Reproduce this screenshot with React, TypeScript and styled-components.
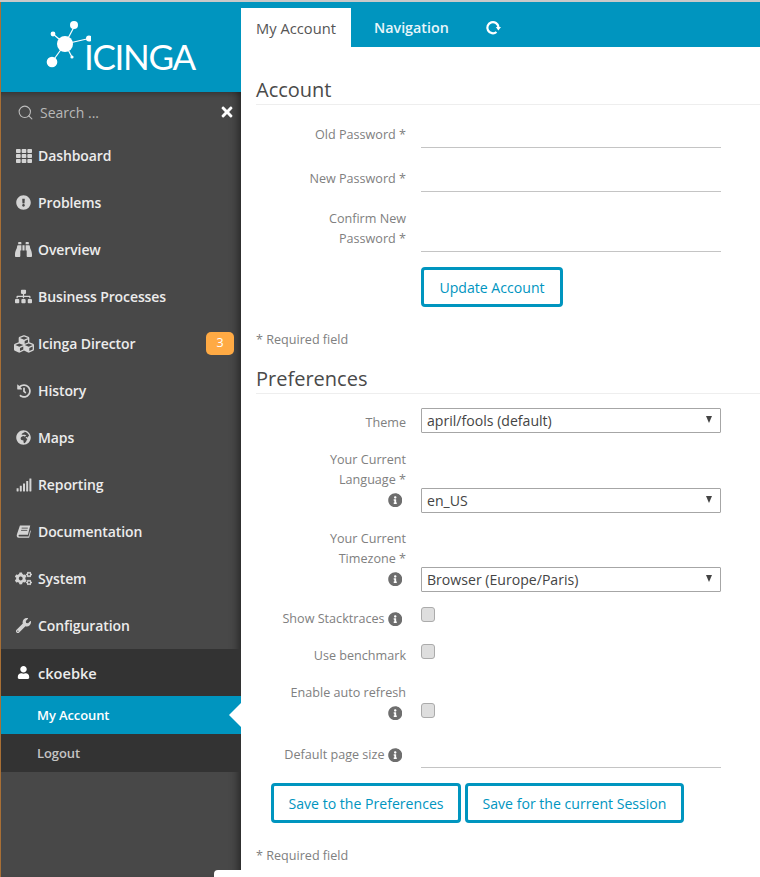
import React from "react";
import styled, { createGlobalStyle } from "styled-components";
import {
  FaTh, FaExclamationCircle, FaBinoculars, FaSitemap, FaCubes, FaHistory,
  FaGlobeAfrica, FaSignal, FaCogs, FaWrench, FaUser, FaInfoCircle, FaTimes,
} from "react-icons/fa";
import { Search } from "lucide-react";

const Global = createGlobalStyle`
  html, body { margin: 0; padding: 0; height: 100%; overflow: hidden; background: #fff; }
  body { font-family: "Open Sans", "Noto Sans", sans-serif; }
  * { box-sizing: border-box; }
`;

const Page = styled.div`
  position: relative;
  display: flex;
  width: 760px;
  height: 877px;
  overflow: hidden;
  border-top: 2px solid #c9c9c9;
`;

const Sidebar = styled.aside`
  width: 241px;
  flex: none;
  display: flex;
  flex-direction: column;
  background: #484848;
  border-left: 1px solid #a86f35;
  box-shadow: inset -10px 0 9px -7px rgba(0, 0, 0, 0.45);
`;

const Brand = styled.div`
  height: 90px;
  flex: none;
  background: #0095bf;
  display: flex;
  align-items: flex-start;
  padding: 16px 0 0 44px;
`;

const LogoMark = styled.svg`
  width: 46px;
  height: 56px;
  flex: none;
  display: block;
`;

const Wordmark = styled.span`
  margin: 17px 0 0 -7px;
  font-family: "Lato", sans-serif;
  font-size: 35px;
  line-height: 42px;
  font-weight: 400;
  color: #fff;
  letter-spacing: -1.3px;
`;

const SearchRow = styled.div`
  height: 40px;
  display: flex;
  align-items: center;
  padding: 0 6px 0 16px;
  gap: 6px;
  color: #bdbdbd;
  font-size: 14px;
  box-shadow: inset 0 7px 6px -6px rgba(0, 0, 0, 0.35);
`;

const SearchText = styled.span`
  flex: 1;
  color: #b8b8b8;
`;

const Item = styled.div<{ $dark?: boolean }>`
  height: 47px;
  display: flex;
  align-items: center;
  color: #ececec;
  font-size: ${(p) => (p.$dark ? "14.6px" : "14px")};
  font-weight: 600;
  letter-spacing: ${(p) => (p.$dark ? "0" : "-0.1px")};
  padding-right: 7px;
  background: ${(p) => (p.$dark ? "#333" : "transparent")};
`;

const IconSlot = styled.span`
  width: 37px;
  flex: none;
  display: flex;
  justify-content: center;
  padding-left: 15px;
  padding-right: 7px;
  color: #d4d4d4;
  font-size: 15px;
  svg { display: block; flex: none; }
`;

const ItemLabel = styled.span`
  flex: 1;
`;

const Badge = styled.span`
  width: 28px;
  height: 23px;
  border-radius: 5px;
  background: #ffaa44;
  color: #fff;
  font-size: 12.5px;
  font-weight: 400;
  letter-spacing: 0;
  display: flex;
  align-items: center;
  justify-content: center;
  padding-bottom: 3px;
`;

const SubMenu = styled.div`
  background: #333;
`;

const SubItem = styled.div<{ $active?: boolean }>`
  position: relative;
  height: 38px;
  display: flex;
  align-items: center;
  padding-left: 36px;
  font-size: 13px;
  font-weight: 600;
  letter-spacing: -0.1px;
  color: ${(p) => (p.$active ? "#fff" : "#c4c4c4")};
  background: ${(p) => (p.$active ? "#0095bf" : "transparent")};
`;

const Pointer = styled.span`
  position: absolute;
  right: 0;
  top: 7px;
  width: 0;
  height: 0;
  border-style: solid;
  border-width: 12px 12px 12px 0;
  border-color: transparent #fff transparent transparent;
`;

const Main = styled.main`
  flex: 1;
  min-width: 0;
  display: flex;
  flex-direction: column;
`;

const TabBar = styled.nav`
  height: 45px;
  flex: none;
  background: #0095bf;
  display: flex;
  align-items: flex-end;
`;

const Tab = styled.div<{ $active?: boolean }>`
  height: 39px;
  display: flex;
  align-items: center;
  justify-content: center;
  font-size: ${(p) => (p.$active ? "14.7px" : "14.3px")};
  font-weight: ${(p) => (p.$active ? 400 : 600)};
  width: ${(p) => (p.$active ? "110px" : "auto")};
  padding: ${(p) => (p.$active ? "0" : "0 23px")};
  color: ${(p) => (p.$active ? "#555" : "#e8f6fa")};
  background: ${(p) => (p.$active ? "#fff" : "transparent")};
`;

const RefreshTab = styled.div`
  height: 39px;
  display: flex;
  align-items: center;
  padding-left: 13px;
  color: #fff;
`;

const Content = styled.div`
  padding: 0 0 0 15px;
`;

const Heading = styled.h2<{ $top: number }>`
  margin: ${(p) => p.$top}px 0 0;
  height: 30px;
  line-height: 30px;
  font-size: 20px;
  font-weight: 400;
  color: #4a4a4a;
  border-bottom: 1px solid #eee;
`;

const Row = styled.div<{ $top: number; $align?: string }>`
  display: flex;
  align-items: ${(p) => p.$align || "flex-end"};
  margin-top: ${(p) => p.$top}px;
`;

const Label = styled.label<{ $pb?: number; $pt?: number }>`
  width: 150px;
  flex: none;
  text-align: right;
  font-size: 12.6px;
  line-height: 20px;
  color: #808080;
  padding-bottom: ${(p) => p.$pb ?? 3}px;
  padding-top: ${(p) => p.$pt ?? 0}px;
`;

const Hint = styled(FaInfoCircle)`
  color: #6e6e6e;
  font-size: 14.5px;
  vertical-align: -3px;
  margin: 0 4px 0 3px;
`;

const Field = styled.input`
  display: block;
  width: 300px;
  height: 26px;
  margin-left: 15px;
  border: 0;
  border-bottom: 1px solid #c4c4c4;
  background: transparent;
  outline: none;
`;

const SelectBox = styled.div`
  position: relative;
  width: 300px;
  height: 25px;
  margin-left: 15px;
`;

const Select = styled.select`
  appearance: none;
  display: block;
  width: 100%;
  height: 100%;
  padding: 0 20px 0 5px;
  border: 1px solid #a6a6a6;
  border-radius: 1px;
  background: #fff;
  font: inherit;
  font-size: 14.1px;
  color: #444;
  outline: none;
`;

const Caret = styled.span`
  position: absolute;
  right: 9px;
  top: 8px;
  width: 0;
  height: 0;
  border-left: 3.5px solid transparent;
  border-right: 3.5px solid transparent;
  border-top: 7px solid #444;
`;

const Check = styled.input<{ $top?: number }>`
  appearance: none;
  display: block;
  width: 14px;
  height: 15px;
  margin: ${(p) => p.$top ?? 0}px 0 0 15px;
  background: #dedede;
  border: 1px solid #ababab;
  border-radius: 3px;
`;

const ActionRow = styled.div<{ $top: number; $indent: number }>`
  display: flex;
  gap: 4px;
  margin-top: ${(p) => p.$top}px;
  padding-left: ${(p) => p.$indent}px;
`;

const Button = styled.button<{ $w: number }>`
  width: ${(p) => p.$w}px;
  height: 40px;
  flex: none;
  padding: 0;
  background: #fff;
  border: 3px solid #0095bf;
  border-radius: 4px;
  color: #0095bf;
  font: inherit;
  font-size: 14.1px;
`;

const Note = styled.p<{ $top: number }>`
  margin: ${(p) => p.$top}px 0 0;
  font-size: 12.6px;
  line-height: 20px;
  color: #808080;
`;

const FooterNotch = styled.div`
  position: absolute;
  left: 214px;
  bottom: 0;
  width: 27px;
  height: 7px;
  background: #fff;
  border-top-left-radius: 4px;
`;

const Logo = () => (
  <LogoMark viewBox="0 0 46 56" fill="#fff" stroke="#fff">
    <g strokeWidth="1.2" fill="none">
      <path d="M20 26 L29 9" />
      <path d="M20 26 L44 20.5" />
      <path d="M20 26 L8 16" />
      <path d="M20 26 L7 44" />
      <path d="M20 26 L27 39" />
    </g>
    <g stroke="none">
      <circle cx="20" cy="26" r="8" />
      <circle cx="29" cy="7" r="4" />
      <circle cx="44" cy="20.5" r="3" />
      <circle cx="8" cy="16" r="2.4" />
      <circle cx="7" cy="44" r="5.3" />
      <circle cx="27" cy="39" r="1.6" />
    </g>
  </LogoMark>
);

const BookIcon = ({ size = 15 }: { size?: number }) => (
  <svg width={size} height={size} viewBox="0 0 16 16">
    <path
      fill="currentColor"
      d="M4.2 1.5 H15.2 L12.7 11.4 H3.6 C2.4 11.4 2.4 13.2 3.6 13.2 H13.4 L15.2 6.6 L15.8 7.4 L14 14.6 H3 C1 14.6 0.4 12.8 1 10.8 Z"
    />
    <path stroke="#484848" strokeWidth="0.9" d="M6 4.4 H12.6 M5.4 6.8 H12" />
  </svg>
);

const RefreshIcon = () => (
  <svg width="16" height="16" viewBox="0 0 16 16">
    <path d="M11.5 12 A5.6 5.6 0 1 1 13.5 7" fill="none" stroke="currentColor" strokeWidth="2.2" />
    <path d="M10.8 7 H16 L13.4 10.6 Z" fill="currentColor" />
  </svg>
);

const nav: [string, React.ComponentType<{ size?: number }>, number][] = [
  ["Dashboard", FaTh, 16],
  ["Problems", FaExclamationCircle, 15],
  ["Overview", FaBinoculars, 17],
  ["Business Processes", FaSitemap, 17],
  ["Icinga Director", FaCubes, 20],
  ["History", FaHistory, 14],
  ["Maps", FaGlobeAfrica, 15],
  ["Reporting", FaSignal, 16],
  ["Documentation", BookIcon, 15],
  ["System", FaCogs, 17],
  ["Configuration", FaWrench, 15],
];

export default function App() {
  return (
    <Page>
      <Global />
      <Sidebar>
        <Brand>
          <Logo />
          <Wordmark>ICINGA</Wordmark>
        </Brand>
        <SearchRow>
          <Search size={17} strokeWidth={1.5} />
          <SearchText>Search ...</SearchText>
          <FaTimes size={16} color="#fff" />
        </SearchRow>
        {nav.map(([name, Icon, size]) => (
          <Item key={name}>
            <IconSlot><Icon size={size} /></IconSlot>
            <ItemLabel>{name}</ItemLabel>
            {name === "Icinga Director" && <Badge>3</Badge>}
          </Item>
        ))}
        <Item $dark>
          <IconSlot><FaUser size={13} color="#fff" /></IconSlot>
          <ItemLabel>ckoebke</ItemLabel>
        </Item>
        <SubMenu>
          <SubItem $active>My Account<Pointer /></SubItem>
          <SubItem>Logout</SubItem>
        </SubMenu>
      </Sidebar>
      <Main>
        <TabBar>
          <Tab $active>My Account</Tab>
          <Tab>Navigation</Tab>
          <RefreshTab><RefreshIcon /></RefreshTab>
        </TabBar>
        <Content>
          <Heading $top={28}>Account</Heading>
          <Row $top={17}>
            <Label>Old Password *</Label>
            <Field type="password" />
          </Row>
          <Row $top={18}>
            <Label>New Password *</Label>
            <Field type="password" />
          </Row>
          <Row $top={17}>
            <Label $pb={3}>Confirm New<br />Password *</Label>
            <Field type="password" />
          </Row>
          <ActionRow $top={15} $indent={165}>
            <Button $w={142}>Update Account</Button>
          </ActionRow>
          <Note $top={23}>* Required field</Note>
          <Heading $top={14}>Preferences</Heading>
          <Row $top={14}>
            <Label $pb={0}>Theme</Label>
            <SelectBox>
              <Select defaultValue="a"><option value="a">april/fools (default)</option></Select>
              <Caret />
            </SelectBox>
          </Row>
          <Row $top={17}>
            <Label $pb={3}>Your Current<br />Language *<br /><Hint /></Label>
            <SelectBox>
              <Select defaultValue="a"><option value="a">en_US</option></Select>
              <Caret />
            </SelectBox>
          </Row>
          <Row $top={16}>
            <Label $pb={3}>Your Current<br />Timezone *<br /><Hint /></Label>
            <SelectBox>
              <Select defaultValue="a"><option value="a">Browser (Europe/Paris)</option></Select>
              <Caret />
            </SelectBox>
          </Row>
          <Row $top={15} $align="flex-start">
            <Label $pb={0} $pt={2}>Show Stacktraces<Hint /></Label>
            <Check type="checkbox" />
          </Row>
          <Row $top={15} $align="flex-start">
            <Label $pb={0} $pt={2}>Use benchmark</Label>
            <Check type="checkbox" />
          </Row>
          <Row $top={17} $align="flex-start">
            <Label $pb={0}>Enable auto refresh<br /><Hint /></Label>
            <Check type="checkbox" $top={20} />
          </Row>
          <Row $top={19}>
            <Label $pb={3}>Default page size<Hint /></Label>
            <Field type="text" />
          </Row>
          <ActionRow $top={15} $indent={15}>
            <Button $w={190}>Save to the Preferences</Button>
            <Button $w={219}>Save for the current Session</Button>
          </ActionRow>
          <Note $top={23}>* Required field</Note>
        </Content>
      </Main>
      <FooterNotch />
    </Page>
  );
}
